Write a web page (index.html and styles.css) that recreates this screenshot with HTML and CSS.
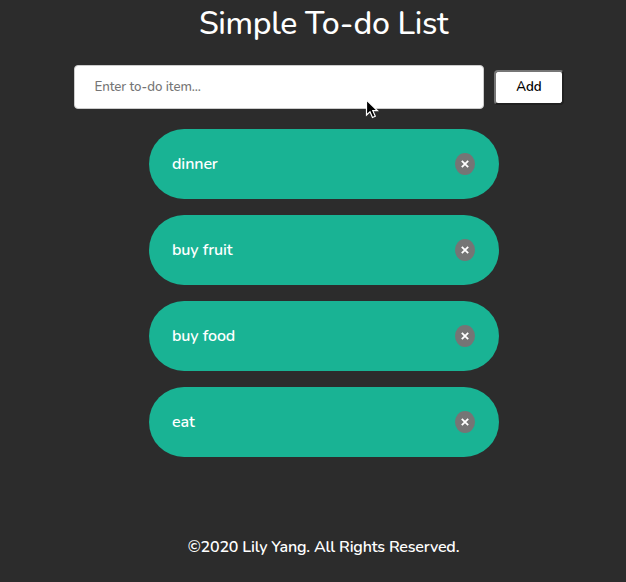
FILE: index.html
```html
<!DOCTYPE html>
<html lang="en">
<head>
<meta charset="utf-8">
<title>Simple To-do List</title>
<link rel="stylesheet" href="styles.css">
</head>
<body>
<main class="app">
  <h1 class="title">Simple To-do List</h1>
  <form class="entry">
    <input class="field" type="text" placeholder="Enter to-do item...">
    <button class="add" type="button">Add</button>
  </form>
  <ul class="list">
    <li class="item"><span>dinner</span><button class="remove" type="button" aria-label="Remove"><svg viewBox="0 0 8 8"><path d="M.8 .8l6.4 6.4M7.2 .8L.8 7.2"/></svg></button></li>
    <li class="item"><span>buy fruit</span><button class="remove" type="button" aria-label="Remove"><svg viewBox="0 0 8 8"><path d="M.8 .8l6.4 6.4M7.2 .8L.8 7.2"/></svg></button></li>
    <li class="item"><span>buy food</span><button class="remove" type="button" aria-label="Remove"><svg viewBox="0 0 8 8"><path d="M.8 .8l6.4 6.4M7.2 .8L.8 7.2"/></svg></button></li>
    <li class="item"><span>eat</span><button class="remove" type="button" aria-label="Remove"><svg viewBox="0 0 8 8"><path d="M.8 .8l6.4 6.4M7.2 .8L.8 7.2"/></svg></button></li>
  </ul>
  <footer class="footer">©2020 Lily Yang. All Rights Reserved.</footer>
</main>
<svg class="cursor" viewBox="0 0 14 20"><path d="M1.500 1v15l3.500-3.300 2.500 5.800 2.800-1.200-2.500-5.600H12.500z"/></svg>
</body>
</html>
```

FILE: styles.css
```css
* { box-sizing: border-box; }
body {
  margin: 0;
  height: 582px;
  overflow: hidden;
  background: #2c2c2c;
  color: #fff;
  font-family: "Nunito", "Open Sans", sans-serif;
}
.app { width: 490px; margin-left: 74px; }
.title {
  margin: 0 0 18px;
  padding: 1px 0 0 9px;
  height: 47px;
  font-size: 32px;
  font-weight: 500;
  line-height: 46px;
  text-align: center;
  letter-spacing: -0.35px;
}
.entry { display: flex; align-items: center; gap: 10px; }
.field {
  width: 410px;
  height: 44px;
  padding: 0 19.500px;
  border: 1px solid #ccc;
  border-radius: 4px;
  background: #fff;
  font: 500 13.3px "Nunito", "Open Sans", sans-serif;
  letter-spacing: -0.1px;
}
.field::placeholder { color: #757575; }
.add {
  width: 70px;
  height: 35px;
  padding: 0;
  border: 2px outset #767676;
  border-radius: 4px;
  background: #fff;
  color: #000;
  font: 600 13.3px "Nunito", "Open Sans", sans-serif;
}
.list {
  display: grid;
  gap: 16px;
  width: 350px;
  margin: 20px 0 0 75px;
  padding: 0;
  list-style: none;
}
.item {
  display: flex;
  align-items: center;
  justify-content: space-between;
  height: 70px;
  padding: 0 24px 0 23px;
  border-radius: 35px;
  background: #19b394;
  font-size: 16px;
  font-weight: 600;
  letter-spacing: -0.1px;
}
.remove {
  display: grid;
  place-items: center;
  width: 20px;
  height: 22px;
  padding: 0;
  border: 0;
  border-radius: 50%;
  background: #757575;
}
.remove svg { width: 8px; height: 8px; fill: none; stroke: #fff; stroke-width: 1.8; }
.footer {
  margin-top: 79px;
  padding-left: 9px;
  text-align: center;
  font-size: 16px;
  font-weight: 600;
  line-height: 22px;
  letter-spacing: -0.19px;
}
.cursor { position: absolute; left: 365px; top: 99px; width: 14px; height: 20px; fill: #000; stroke: #fff; stroke-width: 1.2; }
```
